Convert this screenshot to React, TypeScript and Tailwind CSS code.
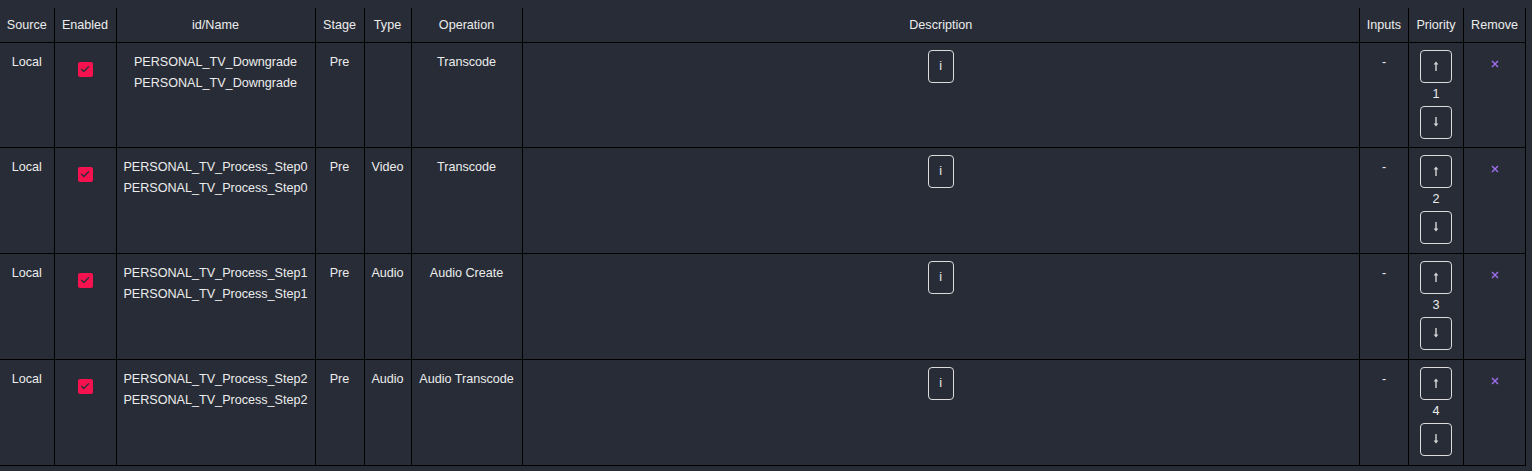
import React from 'react';

interface PluginRow {
  source: string;
  id: string;
  name: string;
  stage: string;
  type: string;
  operation: string;
  inputs: string;
}

const rows: PluginRow[] = [
  { source: 'Local', id: 'PERSONAL_TV_Downgrade', name: 'PERSONAL_TV_Downgrade', stage: 'Pre', type: '', operation: 'Transcode', inputs: '-' },
  { source: 'Local', id: 'PERSONAL_TV_Process_Step0', name: 'PERSONAL_TV_Process_Step0', stage: 'Pre', type: 'Video', operation: 'Transcode', inputs: '-' },
  { source: 'Local', id: 'PERSONAL_TV_Process_Step1', name: 'PERSONAL_TV_Process_Step1', stage: 'Pre', type: 'Audio', operation: 'Audio Create', inputs: '-' },
  { source: 'Local', id: 'PERSONAL_TV_Process_Step2', name: 'PERSONAL_TV_Process_Step2', stage: 'Pre', type: 'Audio', operation: 'Audio Transcode', inputs: '-' },
];

const headers = ['Source', 'Enabled', 'id/Name', 'Stage', 'Type', 'Operation', 'Description', 'Inputs', 'Priority', 'Remove'];
const widths = ['w-[54px]', 'w-[62px]', 'w-[199px]', 'w-[49px]', 'w-[47px]', 'w-[111px]', 'w-auto', 'w-[49px]', 'w-[55px]', 'w-[62px]'];

function Checkbox() {
  return (
    <div className="mx-auto flex h-[15px] w-[15px] items-center justify-center rounded-[2px] bg-[#f5124f]">
      <svg viewBox="0 0 24 24" className="h-[12px] w-[12px]" fill="none" stroke="#2b2f39" strokeWidth={2.6} strokeLinecap="round" strokeLinejoin="round">
        <path d="M5 12.5l4.5 4.5L19 7.5" />
      </svg>
    </div>
  );
}

function Arrow({ down }: { down?: boolean }) {
  return (
    <svg viewBox="0 0 6 10" className={down ? 'h-[10px] w-[6px] rotate-180' : 'h-[10px] w-[6px]'}>
      <path d="M3 2.5V10" stroke="#d6d6d6" strokeWidth={1.4} />
      <path d="M0.6 3.6L3 0.4l2.4 3.2z" fill="#d6d6d6" />
    </svg>
  );
}

function SmallButton({ children, wide }: { children: React.ReactNode; wide?: boolean }) {
  return (
    <button
      className={
        wide
          ? 'flex h-[33px] w-[32px] items-center justify-center rounded-[4px] border border-[#dcdcdc] text-[#e8e8e8]'
          : 'flex h-[33px] w-[26px] items-center justify-center rounded-[4px] border border-[#dcdcdc] text-[#e8e8e8]'
      }
    >
      {children}
    </button>
  );
}

export default function App() {
  return (
    <div
      className="min-h-[471px] bg-[#282c37] pt-[8px] text-[12.6px] leading-[21px] text-[#ececec]"
      style={{ fontFamily: '"Liberation Sans", Arial, Helvetica, sans-serif' }}
    >
      <table className="w-[1526px] table-fixed border-collapse">
        <colgroup>
          {widths.map((w, i) => (
            <col key={i} className={w} />
          ))}
        </colgroup>
        <thead>
          <tr className="h-[34px]">
            {headers.map((h) => (
              <th key={h} className="border-r border-b border-black px-0 pt-[2px] text-center font-normal">
                {h}
              </th>
            ))}
          </tr>
        </thead>
        <tbody>
          {rows.map((r, i) => (
            <tr key={r.id} className={i === 0 ? 'h-[105px] align-top' : 'h-[106px] align-top'}>
              <td className="border-r border-b border-black pt-[9px] text-center">{r.source}</td>
              <td className="border-r border-b border-black pt-[19px]">
                <Checkbox />
              </td>
              <td className="border-r border-b border-black pt-[9px] text-center whitespace-nowrap">
                <div>{r.id}</div>
                <div>{r.name}</div>
              </td>
              <td className="border-r border-b border-black pt-[9px] text-center">{r.stage}</td>
              <td className="border-r border-b border-black pt-[9px] text-center">{r.type}</td>
              <td className="border-r border-b border-black pt-[9px] text-center whitespace-nowrap">{r.operation}</td>
              <td className="border-r border-b border-black pt-[7px]">
                <div className="flex justify-center">
                  <SmallButton>i</SmallButton>
                </div>
              </td>
              <td className="border-r border-b border-black pt-[9px] text-center">{r.inputs}</td>
              <td className="border-r border-b border-black pt-[7px]">
                <div className="flex flex-col items-center">
                  <SmallButton wide>
                    <Arrow />
                  </SmallButton>
                  <div className="leading-[23px]">{i + 1}</div>
                  <SmallButton wide>
                    <Arrow down />
                  </SmallButton>
                </div>
              </td>
              <td className="border-r border-b border-black pt-[17px]">
                <svg viewBox="0 0 8 8" className="mx-auto h-[8px] w-[8px]" stroke="#a06ef0" strokeWidth={1.4}>
                  <path d="M1 1l6 6M7 1L1 7" />
                </svg>
              </td>
            </tr>
          ))}
        </tbody>
      </table>
    </div>
  );
}
